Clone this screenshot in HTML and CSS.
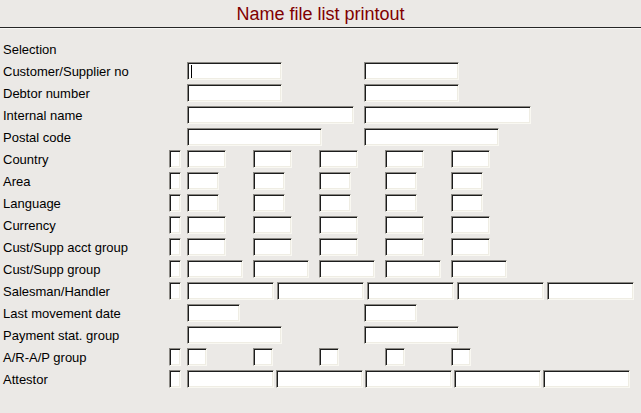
FILE: index.html
```html
<!DOCTYPE html>
<html lang="en">
<head>
    <meta charset="UTF-8">
    <title>Name file list printout</title>
    <link rel="stylesheet" href="styles.css">
</head>
<body>
    <header class="title-bar">
        <h1>Name file list printout</h1>
    </header>

    <div class="form">
        <div class="row heading">
            <span class="label">Selection</span>
        </div>

        <div class="row">
            <span class="label">Customer/Supplier no</span>
            <span class="nocheck"></span>
            <div class="pair">
                <div class="col"><span class="field w95 focused"><i class="caret"></i></span></div>
                <div class="col"><span class="field w95"></span></div>
            </div>
        </div>

        <div class="row">
            <span class="label">Debtor number</span>
            <span class="nocheck"></span>
            <div class="pair">
                <div class="col"><span class="field w95"></span></div>
                <div class="col"><span class="field w95"></span></div>
            </div>
        </div>

        <div class="row">
            <span class="label">Internal name</span>
            <span class="nocheck"></span>
            <div class="pair">
                <div class="col"><span class="field w167"></span></div>
                <div class="col"><span class="field w167"></span></div>
            </div>
        </div>

        <div class="row">
            <span class="label">Postal code</span>
            <span class="nocheck"></span>
            <div class="pair">
                <div class="col"><span class="field w135"></span></div>
                <div class="col"><span class="field w135"></span></div>
            </div>
        </div>

        <div class="row">
            <span class="label">Country</span>
            <span class="check"></span>
            <div class="five">
                <div class="slot"><span class="field w39"></span></div>
                <div class="slot"><span class="field w39"></span></div>
                <div class="slot"><span class="field w39"></span></div>
                <div class="slot"><span class="field w39"></span></div>
                <div class="slot"><span class="field w39"></span></div>
            </div>
        </div>

        <div class="row">
            <span class="label">Area</span>
            <span class="check"></span>
            <div class="five">
                <div class="slot"><span class="field w32"></span></div>
                <div class="slot"><span class="field w32"></span></div>
                <div class="slot"><span class="field w32"></span></div>
                <div class="slot"><span class="field w32"></span></div>
                <div class="slot"><span class="field w32"></span></div>
            </div>
        </div>

        <div class="row">
            <span class="label">Language</span>
            <span class="check"></span>
            <div class="five">
                <div class="slot"><span class="field w32"></span></div>
                <div class="slot"><span class="field w32"></span></div>
                <div class="slot"><span class="field w32"></span></div>
                <div class="slot"><span class="field w32"></span></div>
                <div class="slot"><span class="field w32"></span></div>
            </div>
        </div>

        <div class="row">
            <span class="label">Currency</span>
            <span class="check"></span>
            <div class="five">
                <div class="slot"><span class="field w39"></span></div>
                <div class="slot"><span class="field w39"></span></div>
                <div class="slot"><span class="field w39"></span></div>
                <div class="slot"><span class="field w39"></span></div>
                <div class="slot"><span class="field w39"></span></div>
            </div>
        </div>

        <div class="row">
            <span class="label">Cust/Supp acct group</span>
            <span class="check"></span>
            <div class="five">
                <div class="slot"><span class="field w39"></span></div>
                <div class="slot"><span class="field w39"></span></div>
                <div class="slot"><span class="field w39"></span></div>
                <div class="slot"><span class="field w39"></span></div>
                <div class="slot"><span class="field w39"></span></div>
            </div>
        </div>

        <div class="row">
            <span class="label">Cust/Supp group</span>
            <span class="check"></span>
            <div class="five">
                <div class="slot"><span class="field w56"></span></div>
                <div class="slot"><span class="field w56"></span></div>
                <div class="slot"><span class="field w56"></span></div>
                <div class="slot"><span class="field w56"></span></div>
                <div class="slot"><span class="field w56"></span></div>
            </div>
        </div>

        <div class="row">
            <span class="label">Salesman/Handler</span>
            <span class="check"></span>
            <div class="wide sales">
                <span class="field w87"></span>
                <span class="field w87"></span>
                <span class="field w87"></span>
                <span class="field w87"></span>
                <span class="field w87"></span>
            </div>
        </div>

        <div class="row">
            <span class="label">Last movement date</span>
            <span class="nocheck"></span>
            <div class="pair">
                <div class="col"><span class="field w53"></span></div>
                <div class="col"><span class="field w53"></span></div>
            </div>
        </div>

        <div class="row">
            <span class="label">Payment stat. group</span>
            <span class="nocheck"></span>
            <div class="pair">
                <div class="col"><span class="field w95"></span></div>
                <div class="col"><span class="field w95"></span></div>
            </div>
        </div>

        <div class="row">
            <span class="label">A/R-A/P group</span>
            <span class="check"></span>
            <div class="five">
                <div class="slot"><span class="field w20"></span></div>
                <div class="slot"><span class="field w20"></span></div>
                <div class="slot"><span class="field w20"></span></div>
                <div class="slot"><span class="field w20"></span></div>
                <div class="slot"><span class="field w20"></span></div>
            </div>
        </div>

        <div class="row">
            <span class="label">Attestor</span>
            <span class="check"></span>
            <div class="wide attest">
                <span class="field w87"></span>
                <span class="field w87"></span>
                <span class="field w87"></span>
                <span class="field w87"></span>
                <span class="field w87"></span>
            </div>
        </div>
    </div>
</body>
</html>
```

FILE: styles.css
```css
* {
    margin: 0;
    padding: 0;
    box-sizing: border-box;
}
body {
    background-color: #ebe9e6;
    font-family: 'Liberation Sans', Arial, sans-serif;
    color: #000;
    width: 641px;
    height: 413px;
    overflow: hidden;
}
.title-bar {
    height: 28px;
    border-bottom: 1px solid #262626;
    box-shadow: 0 1px 0 #f7f7f5;
    display: flex;
    justify-content: center;
    align-items: center;
    padding-top: 2px;
}
h1 {
    font-size: 18px;
    font-weight: normal;
    color: #800000;
}
.form {
    padding-top: 11px;
}
.row {
    display: flex;
    align-items: center;
    height: 22px;
}
.row.heading {
    height: 21px;
}
.label {
    width: 169px;
    padding-left: 3px;
    font-size: 13px;
    white-space: nowrap;
}
.check,
.nocheck {
    width: 12px;
    height: 18px;
    margin-right: 6px;
    flex: none;
}
.check {
    background-color: #fff;
    border: 1px solid;
    border-color: #8a8883 #f9f8f2 #f9f8f2 #8a8883;
    box-shadow: inset 1px 1px 0 #1c1c1c, inset -1px -1px 0 #efede4;
}
.field {
    display: block;
    height: 18px;
    background-color: #fff;
    border: 1px solid;
    border-color: #8a8883 #f9f8f2 #f9f8f2 #8a8883;
    box-shadow: inset 1px 1px 0 #1c1c1c, inset -1px -1px 0 #efede4;
    position: relative;
    flex: none;
}
.caret {
    position: absolute;
    left: 3px;
    top: 2px;
    width: 1px;
    height: 13px;
    background-color: #000;
}
.pair {
    display: flex;
}
.pair .col {
    width: 177px;
}
.five {
    display: flex;
}
.five .slot {
    width: 66px;
}
.wide {
    display: flex;
}
.sales {
    gap: 3px;
}
.attest {
    gap: 2px;
}
.w20 { width: 20px; }
.w32 { width: 32px; }
.w39 { width: 39px; }
.w53 { width: 53px; }
.w56 { width: 56px; }
.w87 { width: 87px; }
.w95 { width: 95px; }
.w135 { width: 135px; }
.w167 { width: 167px; }
```
